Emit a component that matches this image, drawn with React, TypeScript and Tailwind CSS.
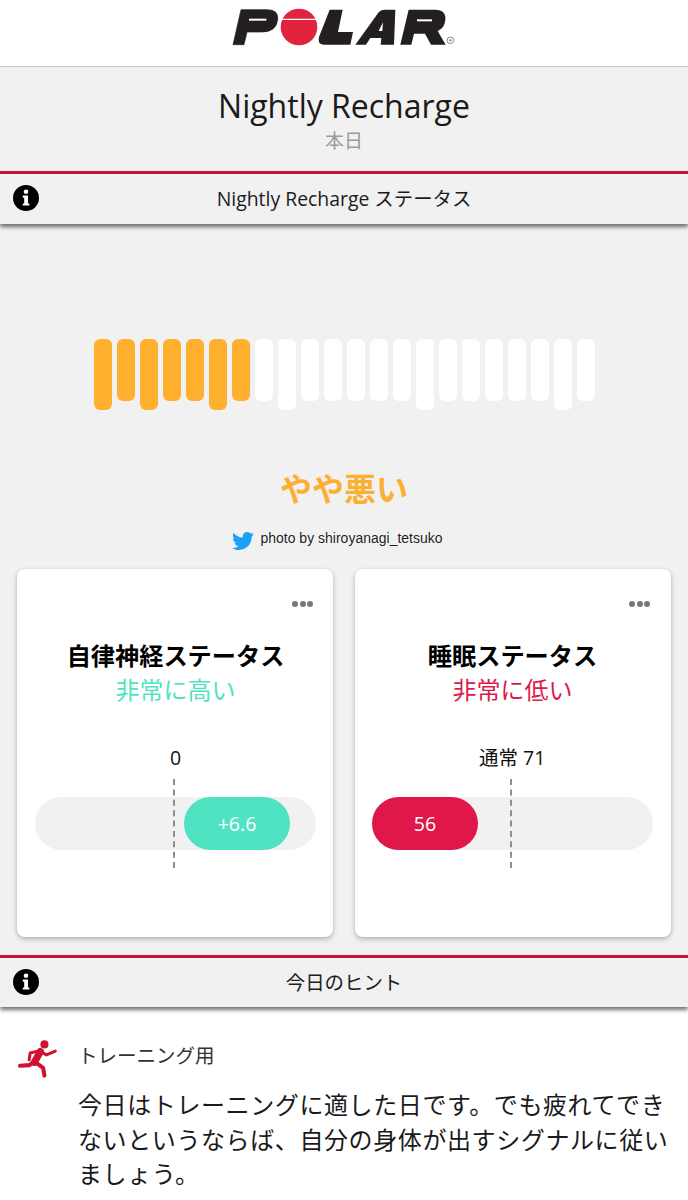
import { FaTwitter } from "react-icons/fa";

const jp = "font-['Open_Sans','Noto_Sans_CJK_JP',sans-serif]";
const tallBars = [0, 2, 5, 8, 14, 20];

function PolarLogo() {
  return (
    <svg viewBox="95 20 675 120" className="h-[40px] w-[225px]">
      <path
        d="M98 133 L122 28 H200 Q236 28 232 58 Q228 95 185 95 H140 L131 133 Z"
        fill="#231f20"
        stroke="#231f20"
        strokeWidth="2"
        strokeLinejoin="round"
      />
      <path d="M146 58 H198" stroke="#fff" strokeWidth="6" />
      <circle cx="296" cy="80" r="55" fill="#e2233d" />
      <path d="M240 57 H352" stroke="#fff" strokeWidth="4" />
      <path
        d="M388 28 H427 L413 95 H458 L450 133 H372 Q350 133 356 110 Z"
        fill="#231f20"
      />
      <path d="M465 133 L535 36 Q541 28 552 28 H585 L581 133 H541 L543 113 H510 L497 133 Z" fill="#231f20" />
      <path d="M535 92 L548 66 L546 92 Z" fill="#fff" />
      <path
        d="M600 133 L625 28 H705 Q738 28 735 60 Q732 85 712 92 L736 133 H692 L674 100 H641 L633 133 Z"
        fill="#231f20"
      />
      <path d="M650 60 H695" stroke="#fff" strokeWidth="6" />
      <circle cx="750" cy="120" r="10" fill="none" stroke="#8a8a8a" strokeWidth="3" />
      <circle cx="750" cy="120" r="3.5" fill="#8a8a8a" />
    </svg>
  );
}

function InfoIcon() {
  return (
    <svg viewBox="0 0 26 26" className="h-[26px] w-[26px] shrink-0">
      <circle cx="13" cy="13" r="13" fill="#000" />
      <circle cx="13" cy="6.8" r="2.3" fill="#fff" />
      <path d="M9.8 10.6 H15 V18.4 H16.4 V20.6 H9.8 V18.4 H11.2 V12.8 H9.8 Z" fill="#fff" />
    </svg>
  );
}

function RunnerIcon() {
  return (
    <svg viewBox="54 62 118 112" className="h-[38px] w-[40px] shrink-0">
      <circle cx="132" cy="75" r="12" fill="#d0112f" />
      <g fill="none" stroke="#d0112f" strokeLinecap="round" strokeLinejoin="round">
        <path d="M120 96 L102 128" strokeWidth="21" />
        <path d="M87 120 L90 100 L116 94 L138 106 L164 95" strokeWidth="9" />
        <path d="M106 128 L128 144 L132 167" strokeWidth="12" />
        <path d="M100 126 L88 136 L60 138" strokeWidth="12" />
      </g>
    </svg>
  );
}

function SectionBar({ label, heightClass }: { label: string; heightClass: string }) {
  return (
    <div className="relative z-10 border-t-[3px] border-[#c3143b] bg-[#f1f1f1] shadow-[0_3px_4px_rgba(0,0,0,0.55)]">
      <div className={`relative flex items-center justify-center ${heightClass}`}>
        <div className="absolute left-[13px] top-[11px]">
          <InfoIcon />
        </div>
        <span className="text-[19.4px] text-[#1c1c1c]">{label}</span>
      </div>
    </div>
  );
}

function StatusCard({
  title,
  status,
  statusColor,
  scale,
  pill,
  pillClass,
  scaleClass,
  padClass,
}: {
  title: string;
  status: string;
  statusColor: string;
  scale: string;
  pill: string;
  pillClass: string;
  scaleClass: string;
  padClass: string;
}) {
  return (
    <div className={`h-[368px] w-[316px] rounded-[8px] bg-white pt-[32px] shadow-[0_2px_5px_rgba(0,0,0,0.28)] ${padClass}`}>
      <div className="flex justify-end gap-[1.5px] pr-[3px]">
        <span className="h-[6px] w-[6px] rounded-full bg-[#777]" />
        <span className="h-[6px] w-[6px] rounded-full bg-[#777]" />
        <span className="h-[6px] w-[6px] rounded-full bg-[#777]" />
      </div>
      <h3 className="mt-[31px] text-center text-[24.2px] font-bold leading-[35px] text-black">{title}</h3>
      <p className={`text-center text-[24px] leading-[34px] ${statusColor}`}>{status}</p>
      <div className="relative mt-[51px] h-[101px]">
        <span className={`absolute top-[-15px] text-[19.5px] leading-[30px] text-[#111] ${scaleClass}`}>{scale}</span>
        <div className="absolute left-0 right-0 top-[39px] h-[53px] rounded-full bg-[#f1f1f1]" />
        <div
          className={`absolute top-[39px] flex h-[53px] w-[106px] items-center justify-center rounded-full text-[19.5px] text-white ${pillClass}`}
        >
          {pill}
        </div>
        <div className="absolute left-[138px] top-[21px] h-[89px] border-l-2 border-dashed border-[#8e8e8e]" />
      </div>
    </div>
  );
}

export default function App() {
  return (
    <div className={`h-[1200px] w-[688px] overflow-hidden bg-white ${jp}`}>
      <header className="flex h-[67px] items-start justify-center border-b border-[#c9c9c9] pt-[7px]">
        <PolarLogo />
      </header>

      <section className="h-[104px] bg-[#f1f1f1] pt-[18px] text-center">
        <h1 className="text-[32px] leading-[42px] text-[#1a1a1a]">Nightly Recharge</h1>
        <p className="text-[19px] leading-[28px] text-[#9a9a9a]">本日</p>
      </section>

      <SectionBar label="Nightly Recharge ステータス" heightClass="h-[50px]" />

      <main className="h-[731px] bg-[#f1f1f1]">
        <div className="flex h-[186px] items-start justify-center gap-[5px] pt-[115px]">
          {Array.from({ length: 22 }, (_, i) => (
            <div
              key={i}
              className={`w-[18px] rounded-[6px] ${i < 7 ? "bg-[#ffb02e]" : "bg-white"} ${
                tallBars.includes(i) ? "h-[71px]" : "h-[62px]"
              }`}
            />
          ))}
        </div>

        <p className="mt-[57px] text-center text-[32px] font-bold leading-[44px] text-[#fbb034]">やや悪い</p>

        <div className="mt-[20px] flex h-[20px] items-center justify-center gap-[6px] pr-[13px]">
          <FaTwitter className="h-[22px] w-[22px] text-[#1da1f2]" />
          <span className="pb-[5px] font-['Liberation_Sans',sans-serif] text-[14px] text-[#222] [text-shadow:1px_0_0_#fff]">
            photo by shiroyanagi_tetsuko
          </span>
        </div>

        <div className="mt-[18px] flex justify-between px-[17px]">
          <StatusCard
            title="自律神経ステータス"
            status="非常に高い"
            statusColor="text-[#50e3c2]"
            scale="0"
            scaleClass="left-[135px]"
            pill="+6.6"
            pillClass="left-[149px] bg-[#50e3c2]"
            padClass="pl-[18px] pr-[17px]"
          />
          <StatusCard
            title="睡眠ステータス"
            status="非常に低い"
            statusColor="text-[#dd1a4a]"
            scale="通常 71"
            scaleClass="left-[107px]"
            pill="56"
            pillClass="left-0 bg-[#e0174a]"
            padClass="pl-[17px] pr-[18px]"
          />
        </div>
      </main>

      <SectionBar label="今日のヒント" heightClass="h-[49px]" />

      <section className="flex gap-[20px] pl-[18px] pt-[33px]">
        <RunnerIcon />
        <div>
          <p className="text-[19.5px] leading-[32px] text-[#333]">トレーニング用</p>
          <p className="mt-[16px] w-[596px] text-[24px] leading-[34.5px] tracking-[0.6px] text-[#1a1a1a]">
            今日はトレーニングに適した日です。でも疲れてできないというならば、自分の身体が出すシグナルに従いましょう。
          </p>
        </div>
      </section>
    </div>
  );
}
